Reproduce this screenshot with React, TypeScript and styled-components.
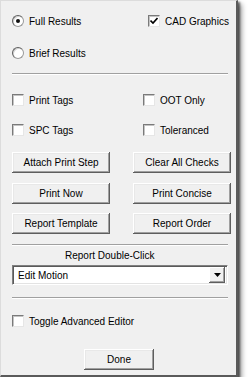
import React, { FC } from 'react';
import styled, { createGlobalStyle } from 'styled-components';

const GlobalStyle = createGlobalStyle`
  html, body {
    margin: 0;
    padding: 0;
    background: #ffffff;
  }
  body {
    font-family: "Liberation Sans", Arial, sans-serif;
    font-size: 10px;
    color: #000;
  }
`;

const Dialog = styled.div`
  width: 238px;
  box-sizing: border-box;
  background: #f0f0f0;
  border-top: 1px solid #dcdcdc;
  border-left: 1px solid #dcdcdc;
  border-right: 2px solid #5a5a5a;
  border-bottom: 2px solid #5a5a5a;
  box-shadow: 2px 2px 2px rgba(0, 0, 0, 0.55), 4px 4px 5px rgba(0, 0, 0, 0.35);
  padding: 10px 8px 5px 11px;
  display: flex;
  flex-direction: column;
`;

const Grid = styled.div<{ $gap?: number; $top?: number }>`
  display: grid;
  grid-template-columns: 121px 98px;
  row-gap: ${p => p.$gap ?? 0}px;
  margin-top: ${p => p.$top ?? 0}px;
`;

const Option = styled.label<{ $indent?: number; $top?: number }>`
  display: flex;
  align-items: center;
  gap: 5px;
  height: 20px;
  margin-top: ${p => p.$top ?? 0}px;
  padding-left: ${p => p.$indent ?? 0}px;
  white-space: nowrap;
`;

const Radio = styled.span<{ $on?: boolean }>`
  width: 12px;
  height: 12px;
  border-radius: 50%;
  box-sizing: border-box;
  border: 1px solid #9a9a9a;
  border-top-color: #5f5f5f;
  border-left-color: #5f5f5f;
  background: #fff;
  box-shadow: inset 1px 1px 0 #d4d4d4;
  display: flex;
  align-items: center;
  justify-content: center;
  flex-shrink: 0;
  &::after {
    content: '';
    width: 4px;
    height: 4px;
    border-radius: 50%;
    background: ${p => (p.$on ? '#111' : 'transparent')};
  }
`;

const Box = styled.span`
  width: 12px;
  height: 12px;
  box-sizing: border-box;
  background: #fff;
  border-top: 1px solid #7a7a7a;
  border-left: 1px solid #7a7a7a;
  border-right: 1px solid #e6e6e6;
  border-bottom: 1px solid #e6e6e6;
  box-shadow: inset 1px 1px 0 #c4c4c4;
  display: flex;
  align-items: center;
  justify-content: center;
  flex-shrink: 0;
`;

const Separator = styled.div<{ $top: number }>`
  height: 0;
  border-top: 1px solid #a0a0a0;
  border-bottom: 1px solid #ffffff;
  margin-top: ${p => p.$top}px;
`;

const Button = styled.button<{ $width?: number }>`
  width: ${p => p.$width ?? 98}px;
  height: 21px;
  padding: 0;
  font-family: "Liberation Sans", Arial, sans-serif;
  font-size: 10px;
  color: #000;
  background: #f0f0f0;
  border: none;
  box-shadow: inset -1px -1px 0 #5e5e5e, inset 1px 1px 0 #ffffff,
    inset -2px -2px 0 #a0a0a0, inset 2px 2px 0 #e8e8e8;
`;

const Caption = styled.div`
  margin-top: 3px;
  height: 14px;
  line-height: 14px;
  padding-left: 53px;
`;

const Select = styled.div`
  margin-top: 2px;
  height: 20px;
  box-sizing: border-box;
  background: #fff;
  border-top: 1px solid #808080;
  border-left: 1px solid #808080;
  border-right: 1px solid #ffffff;
  border-bottom: 1px solid #ffffff;
  box-shadow: inset 1px 1px 0 #5a5a5a, inset -1px -1px 0 #e3e3e3;
  display: flex;
  align-items: center;
  padding: 2px 2px 2px 5px;
`;

const SelectText = styled.span`
  flex: 1;
`;

const Arrow = styled.span`
  width: 16px;
  height: 16px;
  background: #f0f0f0;
  box-shadow: inset -1px -1px 0 #5e5e5e, inset 1px 1px 0 #ffffff,
    inset -2px -2px 0 #a0a0a0;
  display: flex;
  align-items: center;
  justify-content: center;
`;

const Footer = styled.div`
  margin-top: 18px;
  padding-left: 72px;
`;

const Check: FC = () => (
  <svg width="8" height="8" viewBox="0 0 8 8">
    <path d="M0.5 3.5 L3 6 L7.5 1" stroke="#000" strokeWidth="1.6" fill="none" />
  </svg>
);

const App: FC = () => {
  return (
    <>
      <GlobalStyle />
      <Dialog>
        <Grid $gap={12}>
          <Option><Radio $on />Full Results</Option>
          <Option $indent={15}><Box><Check /></Box>CAD Graphics</Option>
          <Option><Radio />Brief Results</Option>
          <span />
        </Grid>
        <Separator $top={10} />
        <Grid $gap={10} $top={15}>
          <Option><Box />Print Tags</Option>
          <Option $indent={10}><Box />OOT Only</Option>
          <Option><Box />SPC Tags</Option>
          <Option $indent={10}><Box />Toleranced</Option>
        </Grid>
        <Grid $gap={9.5} $top={12}>
          <Button>Attach Print Step</Button>
          <Button>Clear All Checks</Button>
          <Button>Print Now</Button>
          <Button>Print Concise</Button>
          <Button>Report Template</Button>
          <Button>Report Order</Button>
        </Grid>
        <Separator $top={10} />
        <Caption>Report Double-Click</Caption>
        <Select>
          <SelectText>Edit Motion</SelectText>
          <Arrow>
            <svg width="7" height="4" viewBox="0 0 7 4">
              <path d="M0 0 H7 L3.5 4 Z" fill="#000" />
            </svg>
          </Arrow>
        </Select>
        <Separator $top={12} />
        <Option $top={12}><Box />Toggle Advanced Editor</Option>
        <Footer>
          <Button $width={70}>Done</Button>
        </Footer>
      </Dialog>
    </>
  );
};

export default App;
